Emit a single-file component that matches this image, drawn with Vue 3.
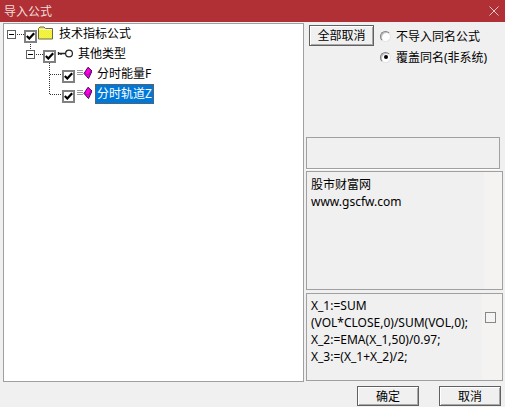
<script setup>
const rows = [
  { text: '技术指标公式', level: 0, exp: true, icon: 'folder' },
  { text: '其他类型', level: 1, exp: true, icon: 'key' },
  { text: '分时能量F', level: 2, exp: false, icon: 'gem' },
  { text: '分时轨道Z', level: 2, exp: false, icon: 'gem', selected: true },
]
</script>

<template>
  <div class="win">
    <header class="title">
      <span>导入公式</span>
      <svg class="close" width="10" height="10" viewBox="0 0 10 10"><path d="M0.5 0.5L9.5 9.5M9.500 0.5L0.5 9.5" stroke="#e6c6c8" fill="none"/></svg>
    </header>
    <div class="main">
      <section class="tree">
        <svg class="lines" width="80" height="80" viewBox="4 24 80 80">
          <path d="M17 34.500H24M36 54.500H43M30.500 44V50M49.500 63V94M50 74.500H62M50 94.500H62" stroke="#333" stroke-dasharray="1 1" fill="none" shape-rendering="crispEdges"/>
        </svg>
        <div v-for="r in rows" :key="r.text" class="row" :class="'lv' + r.level">
          <span class="exp-slot">
            <span v-if="r.exp" class="exp"><i></i></span>
          </span>
          <span class="check">
            <svg width="9" height="8" viewBox="0 0 9 8"><path d="M0.800 4L3.300 6.500L8.200 1.200" stroke="#000" stroke-width="2.200" fill="none"/></svg>
          </span>
          <svg v-if="r.icon === 'folder'" class="ic" width="16" height="14" viewBox="0 0 16 14">
            <defs>
              <pattern id="dither" width="2" height="2" patternUnits="userSpaceOnUse">
                <rect width="2" height="2" fill="#ffff00"/>
                <rect width="1" height="1" fill="#e4e480"/>
                <rect x="1" y="1" width="1" height="1" fill="#e4e480"/>
              </pattern>
            </defs>
            <path d="M0.500 13V2.500L2 1H6L7.500 2.500H14.500V13Z" fill="url(#dither)" stroke="#6a6a40"/>
            <path d="M1 3.500H14" stroke="#fdfdd0"/>
          </svg>
          <svg v-else-if="r.icon === 'key'" class="ic" width="16" height="9" viewBox="0 0 16 9">
            <circle cx="12" cy="4.500" r="3.400" fill="#fff" stroke="#222" stroke-width="1.200"/>
            <path d="M9 4.500H1.500M1.500 3V6M4 4.500V6" stroke="#222" stroke-width="1.300" fill="none"/>
          </svg>
          <svg v-else class="ic" width="16" height="12" viewBox="0 0 16 12">
            <path d="M1 3.500H7M1 5.500H7M1 7.500H7" stroke="#999"/>
            <path d="M12 0.300L16 4L12.500 11.500L8 6.500Z" fill="#ff00e0" stroke="#400060"/>
            <path d="M9 6.500L12.500 8L15 4" fill="none" stroke="#900090" stroke-width="0.700"/>
          </svg>
          <span class="label" :class="{ sel: r.selected }">{{ r.text }}</span>
        </div>
      </section>
      <aside class="side">
        <div class="top">
          <div class="btn all">全部取消</div>
          <div class="radios">
            <label class="radio"><span class="dot"></span>不导入同名公式</label>
            <label class="radio"><span class="dot on"></span>覆盖同名(非系统)</label>
          </div>
        </div>
        <div class="box empty"></div>
        <div class="box info">
          <div class="pane info-pane">
            <p>股市财富网</p>
            <p>www.gscfw.com</p>
          </div>
        </div>
        <div class="box code">
          <div class="pane code-pane">X_1:=SUM<br>(VOL*CLOSE,0)/SUM(VOL,0);<br>X_2:=EMA(X_1,50)/0.97;<br>X_3:=(X_1+X_2)/2;</div>
          <span class="scroll-check"></span>
        </div>
      </aside>
    </div>
    <footer class="foot">
      <div class="btn ok">确定</div>
      <div class="btn cancel">取消</div>
    </footer>
  </div>
</template>

<style>
html, body { margin: 0; background: #f0f0f0; }
</style>

<style scoped>
.win {
  width: 505px;
  height: 407px;
  background: #f0f0f0;
  font: 12px "Noto Sans", "Noto Sans CJK SC", sans-serif;
  color: #000;
  overflow: hidden;
  display: flex;
  flex-direction: column;
}
.title {
  height: 22px;
  background: #b03035;
  color: #f1dcdc;
  display: flex;
  align-items: center;
  justify-content: space-between;
  padding: 0 6px 0 4px;
  font-size: 12px;
  flex: none;
}
.main { display: flex; padding: 1px 2px 0 3px; gap: 2px; height: 359px; }
.tree {
  position: relative;
  width: 301px;
  box-sizing: border-box;
  height: 359px;
  background: #fff;
  border: 1px solid #a0a0a0;
}
.lines { position: absolute; left: 0; top: 0; }
.row { display: flex; align-items: center; height: 20px; position: relative; }
.lv0 { padding-left: 3px; }
.lv1 { padding-left: 22px; }
.lv2 { padding-left: 41px; }
.exp-slot { width: 17px; display: flex; flex: none; }
.exp {
  width: 9px;
  height: 9px;
  box-sizing: border-box;
  border: 1px solid #606060;
  background: #fff;
  display: flex;
  align-items: center;
  justify-content: center;
}
.exp i { display: block; width: 5px; height: 1px; background: #000; }
.check {
  width: 13px;
  height: 13px;
  box-sizing: border-box;
  border: 2px solid #808080;
  background: #fff;
  display: flex;
  align-items: center;
  justify-content: center;
  flex: none;
  margin-top: 4px;
}
.ic { margin-left: 1px; flex: none; margin-bottom: 2px; }
.label { margin-left: 3px; padding: 0 2px; line-height: 20px; margin-bottom: 0; }
.label.sel { background: #0078d7; color: #fff; outline: 1px dotted #a05010; outline-offset: -1px; }
.side { width: 197px; display: flex; flex-direction: column; flex: none; }
.top { display: flex; height: 114px; padding: 2px 0 0 3px; gap: 6px; box-sizing: border-box; }
.btn {
  box-sizing: border-box;
  border: 1px solid #606060;
  background: #f0f0f0;
  box-shadow: inset 1px 1px 0 #fff, inset -1px -1px 0 #a8a8a8;
  display: flex;
  align-items: center;
  justify-content: center;
  flex: none;
}
.all { width: 65px; height: 21px; padding-bottom: 1px; }
.radios { display: flex; flex-direction: column; gap: 5px; padding-top: 3px; }
.radio { display: flex; align-items: center; height: 16px; gap: 5px; white-space: nowrap; }
.dot {
  width: 11px;
  height: 11px;
  box-sizing: border-box;
  border-radius: 50%;
  border: 1px solid;
  border-color: #808080 #e4e4e4 #e4e4e4 #808080;
  background: #fff;
  box-shadow: inset 1px 1px 0 #c0c0c0;
  display: flex;
  align-items: center;
  justify-content: center;
}
.dot.on::after { content: ""; width: 4px; height: 4px; border-radius: 50%; background: #000; }
.box { box-sizing: border-box; border: 1px solid #a0a0a0; }
.empty { height: 32px; width: 194px; box-shadow: 0 1px 0 #fff; }
.info { height: 119px; margin-top: 2px; width: 197px; background: #f4f3f1; }
.pane { background: #f0f0f0; width: 177px; height: 100%; box-sizing: border-box; }
.info-pane { padding: 4px 0 0 4px; line-height: 17px; }
.info p { margin: 0; }
.code { height: 88px; margin-top: 3px; line-height: 17px; display: flex; position: relative; width: 197px; background: #f4f3f1; }
.code-pane { padding: 3px 0 0 4px; white-space: nowrap; width: 175px; }
.scroll-check { position: absolute; left: 178px; top: 18px; width: 9px; height: 9px; border: 1px solid #888; background: #f4f4f4; }
.foot { display: flex; justify-content: flex-end; gap: 20px; padding: 4px 4px 0 0; }
.ok, .cancel { width: 62px; height: 20px; }
</style>
